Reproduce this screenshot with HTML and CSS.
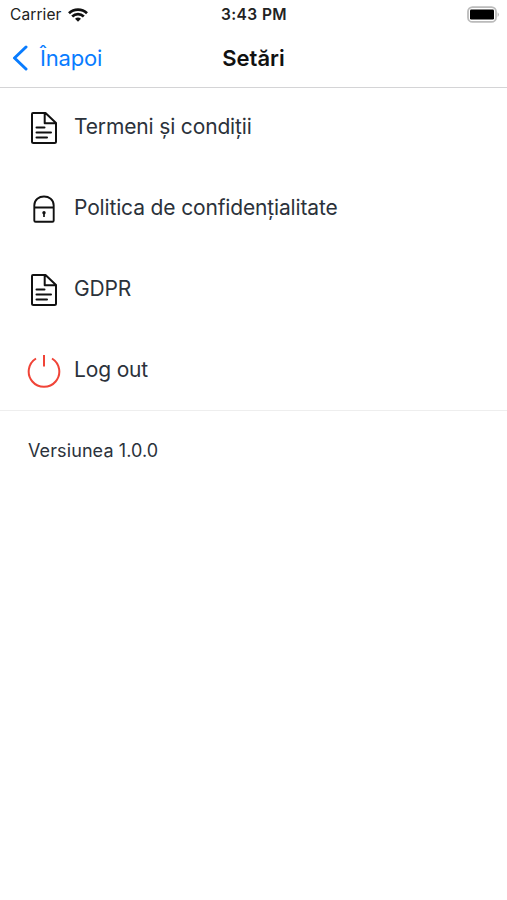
FILE: index.html
```html
<!DOCTYPE html>
<html lang="ro">
<head>
<meta charset="utf-8">
<title>Setări</title>
<link rel="stylesheet" href="styles.css">
</head>
<body>
<div class="status">
  <div class="carrier"><span>Carrier</span>
    <svg width="20" height="14" viewBox="0 0 20 14" fill="none" stroke="#111" stroke-width="2.7"><path d="M1 5.2C6 .3 14 .3 19 5.2M4.2 8.5c3.3-3.2 8.3-3.2 11.6 0"/><path d="M10 13.7 7 10.8q3-2.5 6 0z" fill="#111" stroke="none"/></svg>
  </div>
  <span class="time">3:43 PM</span>
  <svg class="battery" width="33" height="18" viewBox="0 0 33 18"><rect x="1" y="1.1" width="28" height="14.8" rx="4.5" fill="#fff" stroke="#bbb" stroke-width="1.8"/><rect x="3" y="3.5" width="24" height="10" rx="1.2" fill="#000"/><path d="M30.7 6.3q2.2 2.3 0 4.6z" fill="#aaa"/></svg>
</div>
<header class="nav">
  <a class="back"><svg width="17" height="26" viewBox="0 0 17 26" fill="none" stroke="#087cff" stroke-width="3" stroke-linecap="round" stroke-linejoin="round"><path d="M15 2 3.5 13 15 24"/></svg><span>Înapoi</span></a>
  <h1>Setări</h1>
</header>
<main>
  <ul class="menu">
    <li><svg class="icon" viewBox="0 0 34 34" fill="none" stroke="#111" stroke-width="2" stroke-linejoin="round" stroke-linecap="round"><path d="M6 2h12.5L29 12v18.5q0 1.5-1.5 1.5H6.5q-1.5 0-1.5-1.5V3q0-1 1-1zM17.7 2v10.3H29M9.5 16.5h8M9.5 21.5h14.5M9.5 26.5h10.5"/></svg><span>Termeni și condiții</span></li>
    <li><svg class="icon" viewBox="0 0 34 34" fill="none" stroke="#111" stroke-width="1.9" stroke-linejoin="round"><path d="M7.3 15.5V13.5C7.3 1.5 26.7 1.5 26.7 13.5v15q0 1.3-1.3 1.3H8.6q-1.3 0-1.3-1.3V15.5h19.4"/><path d="M17 20.7v4.300" stroke-width="1.7"/><circle cx="17" cy="20.7" r="1.7" fill="#111" stroke="none"/></svg><span>Politica de confidențialitate</span></li>
    <li><svg class="icon" viewBox="0 0 34 34" fill="none" stroke="#111" stroke-width="2" stroke-linejoin="round" stroke-linecap="round"><path d="M6 2h12.5L29 12v18.5q0 1.5-1.5 1.5H6.5q-1.5 0-1.5-1.5V3q0-1 1-1zM17.7 2v10.3H29M9.5 16.5h8M9.5 21.5h14.5M9.5 26.5h10.5"/></svg><span>GDPR</span></li>
    <li><svg class="icon" viewBox="0 0 34 34" fill="none" stroke="#f04438" stroke-width="2"><path d="M9 4.5a15.3 15.3 0 1 0 16 0M17 1v11.5"/></svg><span>Log out</span></li>
  </ul>
  <p class="version">Versiunea 1.0.0</p>
</main>
</body>
</html>
```

FILE: styles.css
```css
* { box-sizing: border-box; }
body {
  margin: 0;
  min-height: 900px;
  background: #fff;
  color: #2b323b;
  font-family: Inter, "Liberation Sans", sans-serif;
}
svg { display: block; flex: none; }
.status {
  display: grid;
  grid-template-columns: 1fr auto 1fr;
  align-items: center;
  height: 29px;
  padding: 0 7px 0 10px;
  color: #222;
  font-size: 15.5px;
}
.carrier { display: flex; align-items: center; gap: 6px; letter-spacing: .1px; }
.time { font-size: 15.5px; font-weight: 600; letter-spacing: .4px; margin-right: 2px; }
.battery { justify-self: end; }
.nav {
  display: grid;
  grid-template-columns: 1fr auto 1fr;
  align-items: center;
  height: 59px;
  padding: 0 11px;
  border-bottom: 1px solid #d4d4d6;
}
.back { display: flex; align-items: center; gap: 12px; color: #087cff; font-size: 22px; letter-spacing: -.2px; }
h1 { margin: 0; color: #111; font-size: 22px; font-weight: 600; }
.menu {
  list-style: none;
  margin: 0;
  padding: 0;
  height: 323px;
  border-bottom: 1px solid #eee;
}
.menu li {
  display: flex;
  align-items: center;
  gap: 13px;
  height: 81px;
  padding: 0 27px 2px;
  font-size: 21px;
  letter-spacing: -.15px;
}
.menu span { padding-bottom: 3px; }
.icon { width: 34px; height: 34px; }
.version { margin: 0; padding: 28px; font-size: 18px; line-height: 24px; letter-spacing: .1px; }
```
